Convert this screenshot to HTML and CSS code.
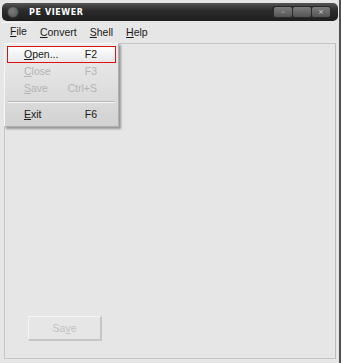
FILE: index.html
```html
<!DOCTYPE html>
<html lang="en">
<head>
    <meta charset="UTF-8">
    <title>PE Viewer</title>
    <link rel="stylesheet" href="styles.css">
</head>
<body>
    <div class="window">
        <div class="titlebar">
            <span class="app-icon"></span>
            <span class="title">PE VIEWER</span>
            <div class="win-buttons">
                <span class="win-btn">&ndash;</span>
                <span class="win-btn"></span>
                <span class="win-btn">&times;</span>
            </div>
        </div>
        <div class="menubar">
            <span class="menu-item active"><u>F</u>ile</span>
            <span class="menu-item"><u>C</u>onvert</span>
            <span class="menu-item"><u>S</u>hell</span>
            <span class="menu-item"><u>H</u>elp</span>
        </div>
        <div class="panel">
            <div class="dropdown">
                <div class="drop-item selected"><span><u>O</u>pen...</span><span>F2</span></div>
                <div class="drop-item disabled"><span><u>C</u>lose</span><span>F3</span></div>
                <div class="drop-item disabled"><span><u>S</u>ave</span><span>Ctrl+S</span></div>
                <div class="separator"></div>
                <div class="drop-item"><span><u>E</u>xit</span><span>F6</span></div>
            </div>
            <button class="save-button" disabled>Sa<u>v</u>e</button>
        </div>
    </div>
</body>
</html>
```

FILE: styles.css
```css
body {
    margin: 0;
    background-color: #d8d8d8;
    font-family: "Liberation Sans", Arial, sans-serif;
    font-size: 10.5px;
    color: #1a1a1a;
}
u {
    text-decoration: underline;
    text-underline-offset: 1px;
}
.window {
    width: 337px;
    height: 360px;
    padding: 3px 0 0 2px;
    background-color: #e6e6e6;
    border-right: 2px solid #505050;
    display: flex;
    flex-direction: column;
}
.titlebar {
    height: 18px;
    margin-right: 1px;
    border-radius: 5px;
    background: linear-gradient(#555555, #2c2c2c 40%, #1e1e1e);
    display: flex;
    align-items: center;
    padding-left: 5px;
}
.app-icon {
    width: 10px;
    height: 10px;
    border-radius: 50%;
    background: radial-gradient(circle at 40% 40%, #7a7a7a, #555555);
    border: 1px solid #3a3a3a;
}
.title {
    margin-left: 10px;
    color: #ffffff;
    font-family: "DejaVu Sans", sans-serif;
    font-weight: bold;
    font-size: 8px;
    letter-spacing: 0.6px;
}
.win-buttons {
    margin-left: auto;
    margin-right: 7px;
    display: flex;
    padding: 1px;
    border-radius: 3px;
    background-color: #2a2a2a;
}
.win-btn {
    width: 18px;
    height: 10px;
    margin-left: 1px;
    border-radius: 2px;
    background: linear-gradient(#7c7c7c, #555555);
    color: #d0d0d0;
    font-family: "DejaVu Sans", sans-serif;
    font-size: 7px;
    line-height: 10px;
    text-align: center;
}
.menubar {
    height: 21px;
    display: flex;
    align-items: center;
    padding-top: 1px;
}
.menu-item {
    padding: 0 6px;
    margin-right: 1px;
    line-height: 17px;
}
.menu-item.active {
    border-top: 1px solid #f6f6f6;
    margin-top: -3px;
    padding: 0 6px 0 8px;
}
.panel {
    position: relative;
    flex: 1;
    margin: 0 3px 4px 2px;
    border: 1px solid #c6c6c6;
    border-right-color: #bcbcbc;
    display: flex;
    flex-direction: column;
}
.dropdown {
    position: absolute;
    top: -1px;
    left: -1px;
    width: 109px;
    padding: 2px 2px 3px;
    background: linear-gradient(#ededed, #d2d2d2);
    border: 1px solid #f6f6f6;
    border-right-color: #b0b0b0;
    border-bottom-color: #b0b0b0;
    box-shadow: 2px 2px 2px rgba(0, 0, 0, 0.35);
}
.drop-item {
    display: flex;
    justify-content: space-between;
    height: 17px;
    line-height: 17px;
    padding: 0 19px 0 17px;
    box-sizing: border-box;
}
.drop-item.selected {
    border: 1px solid #e01010;
    background: linear-gradient(#ffffff, #e8e8e8);
    padding: 0 18px 0 16px;
    line-height: 15px;
}
.drop-item.disabled {
    color: #b4b4b4;
}
.separator {
    height: 0;
    margin: 4px 1px 3px;
    border-top: 1px solid #b8b8b8;
    border-bottom: 1px solid #f4f4f4;
}
.save-button {
    margin: auto 0 17px 23px;
    width: 74px;
    height: 25px;
    background-color: #e6e6e6;
    border: 1px solid #f4f4f4;
    border-right: 2px solid #c6c6c6;
    border-bottom: 2px solid #c6c6c6;
    color: #c2c2c2;
    font-family: "Liberation Sans", Arial, sans-serif;
    font-size: 10.5px;
}
```
